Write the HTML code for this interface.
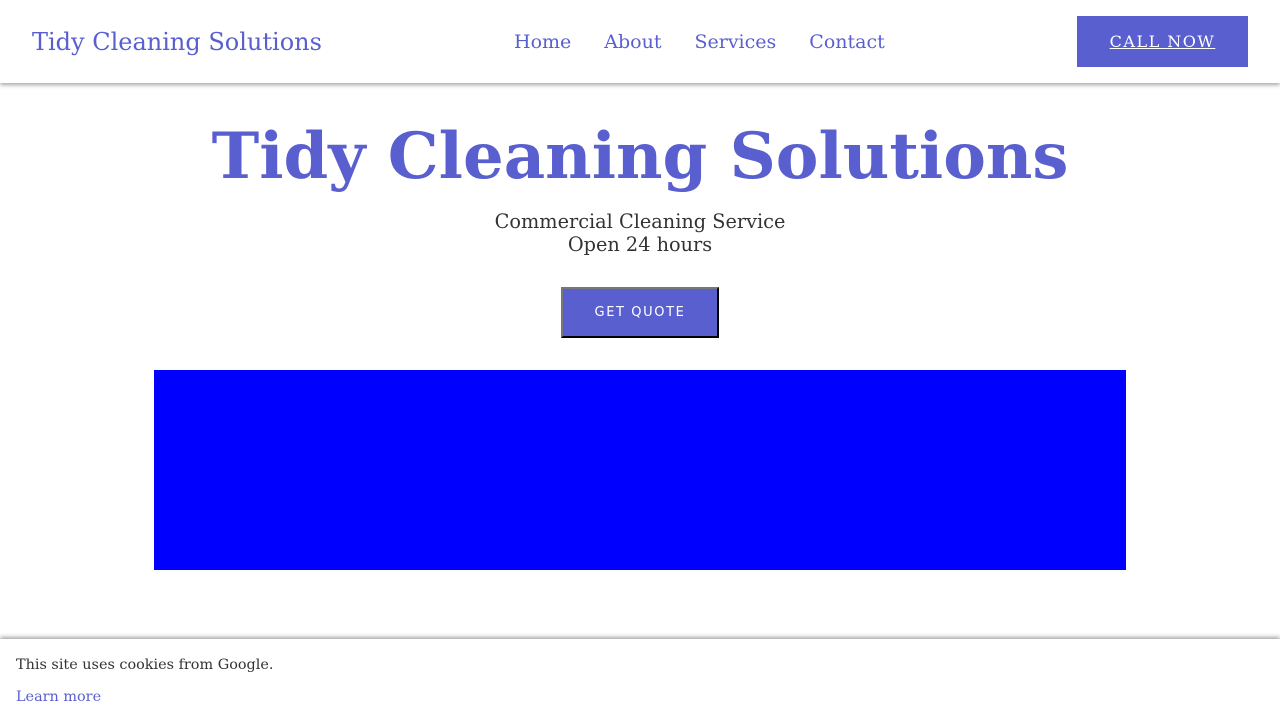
<!DOCTYPE html>
<html><head><style>
*{margin:0;padding:0;box-sizing:border-box}
body{width:1280px;height:720px;background:#fff;font-family:"DejaVu Serif",serif;position:relative;overflow:hidden}
header{position:absolute;top:0;left:0;width:1280px;height:83px;background:#fff;box-shadow:0 2px 4px rgba(0,0,0,.35);z-index:2}
.brand{position:absolute;left:32px;top:27px;font-size:24px;color:#5a5fcf;line-height:30px}
nav{position:absolute;left:514px;top:30px;font-size:19px;color:#5a5fcf;line-height:24px}
nav span{margin-right:33px}
.call{position:absolute;left:1077px;top:16px;width:171px;height:51px;background:#5a5fcf;color:#fff;font-size:16px;letter-spacing:1.5px;text-decoration:underline;text-align:center;line-height:51px}
h1{position:absolute;top:117px;left:0;width:1280px;text-align:center;font-size:64px;font-weight:bold;color:#5a5fcf;line-height:80px}
.sub{position:absolute;top:210px;left:0;width:1280px;text-align:center;font-size:19.3px;color:#333;line-height:23px}
.q{position:absolute;left:561px;top:287px;width:158px;height:51px;background:#5a5fcf;color:#fff;border:2px outset #777;border-color:#777 #222 #222 #777;font-family:"DejaVu Sans",sans-serif;font-size:13px;letter-spacing:1.6px;text-align:center;line-height:48px}
.blue{position:absolute;left:154px;top:370px;width:972px;height:200px;background:#0000ff}
.cookie{position:absolute;left:0;top:639px;width:1280px;height:81px;background:#fff;box-shadow:0 -2px 4px rgba(0,0,0,.35)}
.cookie p{position:absolute;left:16px;font-size:14.4px}
</style></head><body>
<header>
<div class="brand">Tidy Cleaning Solutions</div>
<nav><span>Home</span><span>About</span><span>Services</span><span>Contact</span></nav>
<div class="call">CALL NOW</div>
</header>
<h1>Tidy Cleaning Solutions</h1>
<div class="sub">Commercial Cleaning Service<br>Open 24 hours</div>
<div class="q">GET QUOTE</div>
<div class="blue"></div>
<div class="cookie">
<p style="top:18px;color:#333">This site uses cookies from Google.</p>
<p style="top:50px;color:#5a5fcf">Learn more</p>
</div>
</body></html>
